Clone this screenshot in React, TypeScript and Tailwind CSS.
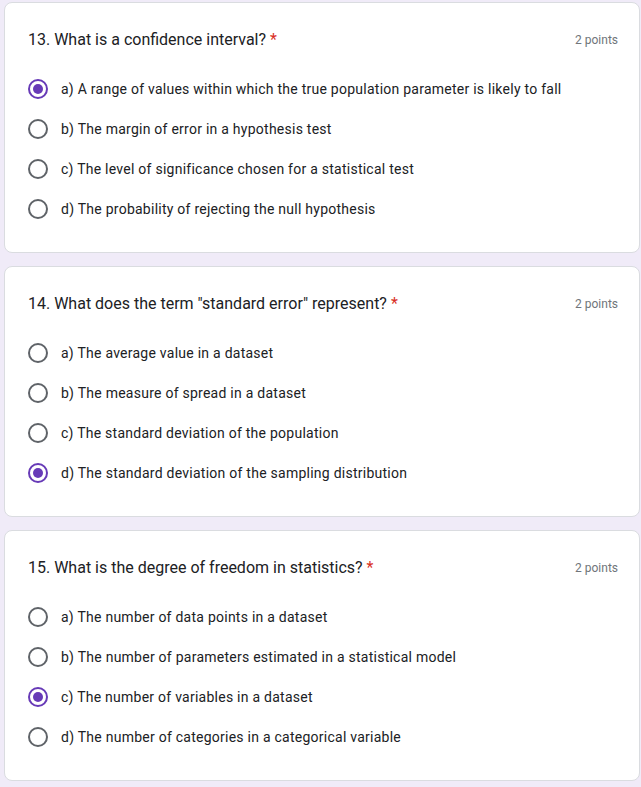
const questions = [
  {
    title: "13. What is a confidence interval?",
    selected: 0,
    options: [
      "a) A range of values within which the true population parameter is likely to fall",
      "b) The margin of error in a hypothesis test",
      "c) The level of significance chosen for a statistical test",
      "d) The probability of rejecting the null hypothesis",
    ],
  },
  {
    title: '14. What does the term "standard error" represent?',
    selected: 3,
    options: [
      "a) The average value in a dataset",
      "b) The measure of spread in a dataset",
      "c) The standard deviation of the population",
      "d) The standard deviation of the sampling distribution",
    ],
  },
  {
    title: "15. What is the degree of freedom in statistics?",
    selected: 2,
    options: [
      "a) The number of data points in a dataset",
      "b) The number of parameters estimated in a statistical model",
      "c) The number of variables in a dataset",
      "d) The number of categories in a categorical variable",
    ],
  },
];

function Radio({ checked }: { checked: boolean }) {
  return checked ? (
    <span className="flex h-5 w-5 shrink-0 items-center justify-center rounded-full border-2 border-[#673ab7]">
      <span className="h-2.5 w-2.5 rounded-full bg-[#673ab7]" />
    </span>
  ) : (
    <span className="h-5 w-5 shrink-0 rounded-full border-2 border-[#5f6368]" />
  );
}

export default function App() {
  return (
    <div
      className="flex min-h-[787px] flex-col gap-[13px] bg-[#f0ebf8] pt-[2px] pl-[4px] pr-[1px] text-[#202124]"
      style={{ fontFamily: "Roboto, 'Noto Sans', sans-serif" }}
    >
      {questions.map((q) => (
        <div
          key={q.title}
          className="h-[251px] rounded-lg border border-[#dadce0] bg-white pt-[25px] pl-[23px] pr-[21px]"
        >
          <div className="flex h-6 items-center justify-between">
            <p className="text-[16px] leading-6">
              {q.title} <span className="text-[#d93025]">*</span>
            </p>
            <span className="text-[12px] text-[#70757a]">2 points</span>
          </div>
          <div className="mt-[17px] flex flex-col">
            {q.options.map((o, i) => (
              <div key={o} className="flex h-10 items-center gap-[13px]">
                <Radio checked={i === q.selected} />
                <span className="text-[14px] leading-5 tracking-[0.25px]">{o}</span>
              </div>
            ))}
          </div>
        </div>
      ))}
    </div>
  );
}
